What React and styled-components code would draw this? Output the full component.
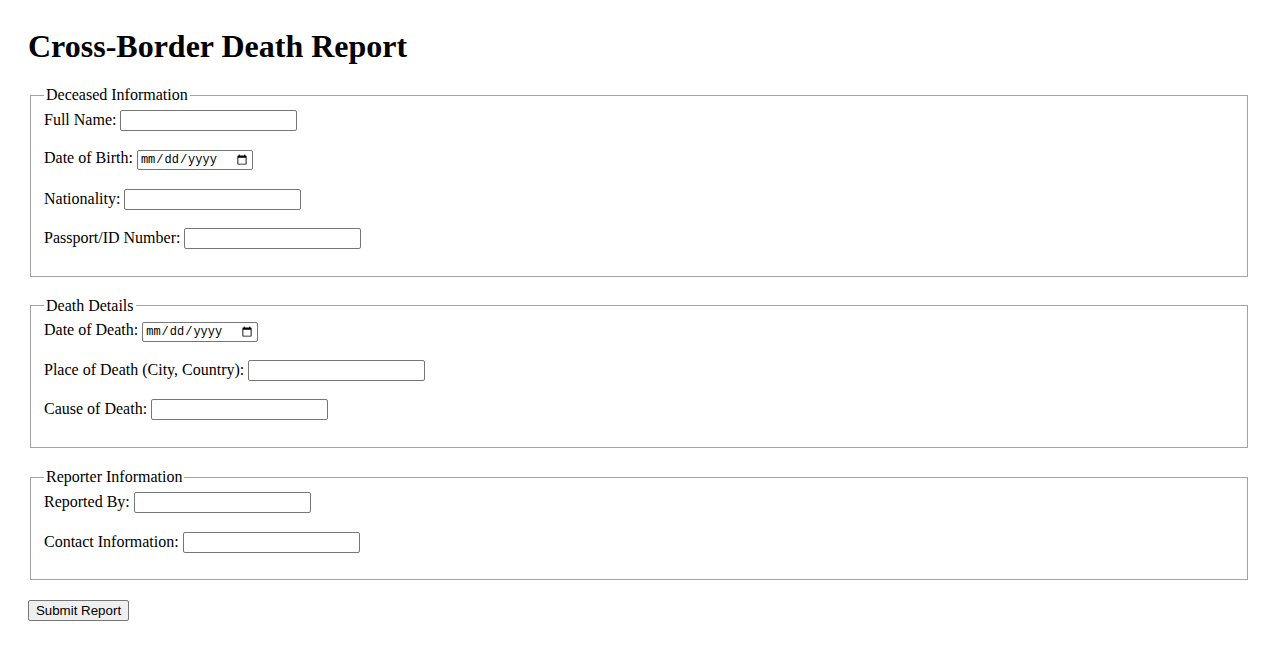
import React from 'react'
import styled, { createGlobalStyle } from 'styled-components'

const GlobalStyle = createGlobalStyle`
    body {
        margin: 8px;
        font-family: "Liberation Serif", "Times New Roman", serif;
        font-size: 16px;
        color: #000;
        background: #fff;
    }
`

const Page = styled.div`
    padding: 20px;
`

const Title = styled.h1`
    font-size: 32px;
    font-weight: bold;
    margin: 0 0 21px;
`

const Section = styled.fieldset`
    margin: 0 2px 20px;
    padding: 6px 13px 8.6px;
    border: 1px solid #a3a3a3;
`

const Legend = styled.legend`
    padding: 0 2px;
`

const Field = styled.div`
    margin-bottom: 18.3px;
`

const TextInput = styled.input`
    font-family: "Liberation Sans", Arial, sans-serif;
    font-size: 13.33px;
    width: 177px;
    height: 21px;
    box-sizing: border-box;
    border: 1px solid #767676;
    border-radius: 2px;
    padding: 1px 2px;
`

const DateInput = styled.input`
    font-family: "Liberation Mono", "DejaVu Sans Mono", monospace;
    font-size: 12px;
    width: 116px;
    height: 20px;
    box-sizing: border-box;
    border: 1px solid #767676;
    border-radius: 2px;
    padding: 1px 2px;
`

const SubmitBtn = styled.button`
    display: block;
    font-family: "Liberation Sans", Arial, sans-serif;
    font-size: 13.33px;
    background: #efefef;
    border: 1px solid #767676;
    border-radius: 2px;
    padding: 1px 6px;
    width: 101px;
    height: 21px;
    color: #000;
`

function Row({ label, type = 'text' }) {
    return (
        <Field>
            <label>
                {label}{' '}
                {type === 'date' ? <DateInput type="date" /> : <TextInput type="text" />}
            </label>
        </Field>
    )
}

function App() {
    return (
        <Page>
            <GlobalStyle />
            <Title>Cross-Border Death Report</Title>
            <form>
                <Section>
                    <Legend>Deceased Information</Legend>
                    <Row label="Full Name:" />
                    <Row label="Date of Birth:" type="date" />
                    <Row label="Nationality:" />
                    <Row label="Passport/ID Number:" />
                </Section>
                <Section>
                    <Legend>Death Details</Legend>
                    <Row label="Date of Death:" type="date" />
                    <Row label="Place of Death (City, Country):" />
                    <Row label="Cause of Death:" />
                </Section>
                <Section>
                    <Legend>Reporter Information</Legend>
                    <Row label="Reported By:" />
                    <Row label="Contact Information:" />
                </Section>
                <SubmitBtn type="submit">Submit Report</SubmitBtn>
            </form>
        </Page>
    )
}

export default App
